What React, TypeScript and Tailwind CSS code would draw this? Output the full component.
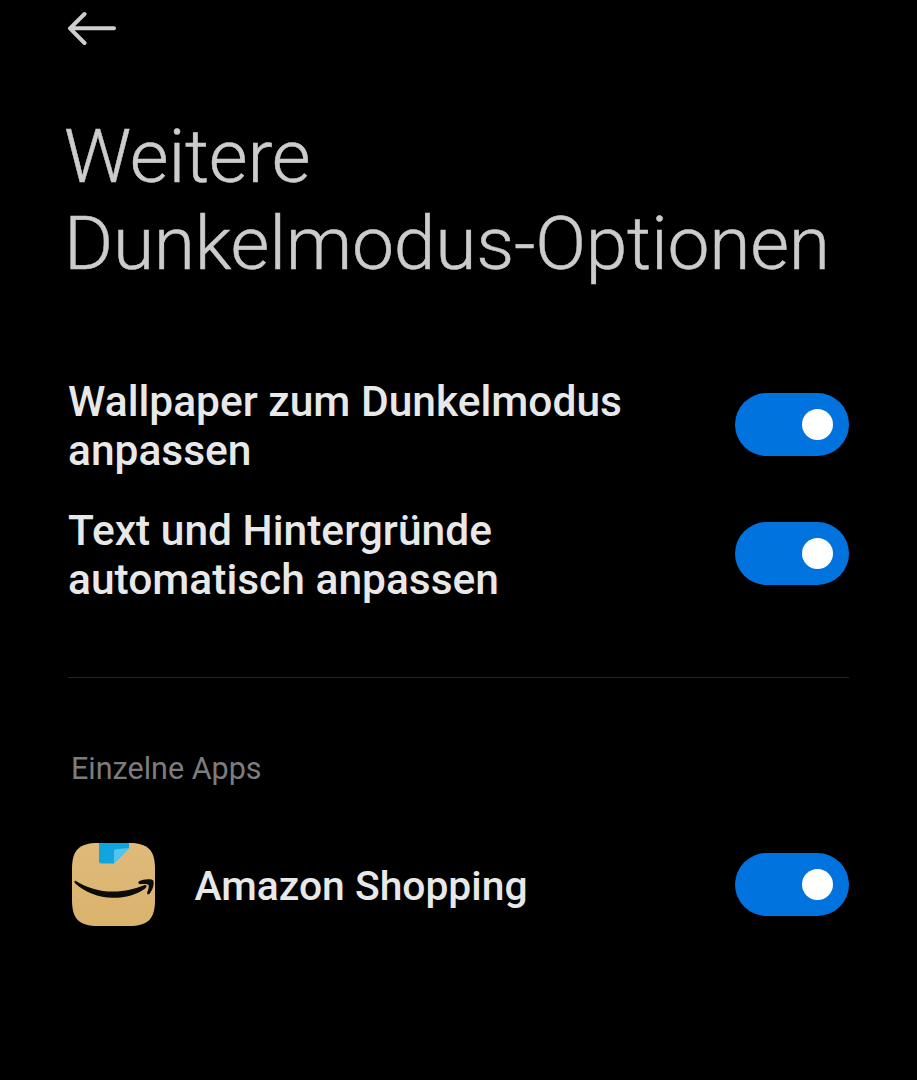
import { useState } from 'react';

function Toggle({ label }: { label: string }) {
    const [on, setOn] = useState(true);

    return (
        <button
            role="switch"
            aria-checked={on}
            aria-label={label}
            onClick={() => setOn(!on)}
            className={`flex h-[63px] w-[114px] shrink-0 items-center rounded-full px-4 ${on ? 'justify-end bg-[#0073de]' : 'justify-start bg-[#333333]'}`}
        >
            <span className="h-[31px] w-[31px] rounded-full bg-white"></span>
        </button>
    );
}

function AmazonIcon() {
    return (
        <svg viewBox="0 0 83 83" className="h-[83px] w-[83px] shrink-0">
            <defs>
                <clipPath id="tile">
                    <path d="M26 0H57C76 0 83 7 83 26V57C83 76 76 83 57 83H26C7 83 0 76 0 57V26C0 7 7 0 26 0Z" />
                </clipPath>
                <linearGradient id="paper" x1="0" y1="0" x2="0" y2="1">
                    <stop offset="0" stopColor="#dfba79" />
                    <stop offset="1" stopColor="#dab36d" />
                </linearGradient>
            </defs>
            <g clipPath="url(#tile)">
                <rect width="83" height="83" fill="url(#paper)" />
                {/* Tape with the folded corner */}
                <path d="M27 0H57V5L42 20.500H29Q27 20.500 27 18.500Z" fill="#10a5dc" />
                <path d="M57 5L42 20.500V9Q42 6 45 6Z" fill="#52c4ee" />
            </g>
            {/* Smile */}
            <path
                d="M3.500 37.800C15 45 27 48.600 41 48.600C53 48.600 63 46 72 42.300C74.500 41.500 75.500 43.500 73.500 45.200C65 51.500 54 54.800 41 54.800C26 54.800 13 49 3 40.200C2 39 2.500 37.300 3.500 37.800Z"
                fill="#0d0b08"
            />
            <path
                d="M67 38.300C71 35.800 80 35.500 81.200 37.600C82.600 40 81 47 77.600 50.700C76.400 51.800 74.600 51.300 75.200 49.700C76.200 47 77.300 43 76.400 41.800C75.200 40.600 71 40.900 68 41.200C66.300 41.200 65.900 39.200 67 38.300Z"
                fill="#0d0b08"
            />
        </svg>
    );
}

export default function App() {
    return (
        <main className="flex h-[1080px] w-[917px] flex-col overflow-hidden bg-black px-[68px] font-['Roboto','Noto_Sans',sans-serif] text-[#e8e8e8]">
            <button aria-label="Zurück" className="mt-[11px] h-[35px] w-[49px]">
                <svg
                    viewBox="0 0 49 35"
                    className="h-full w-full"
                    fill="none"
                    stroke="#cecece"
                    strokeWidth="4"
                    strokeLinecap="round"
                    strokeLinejoin="round"
                >
                    <path d="M16.500 3L2 17.300L16.500 32M2 17.300H46" />
                </svg>
            </button>

            <h1 className="mt-[67px] -ml-[4px] text-[75px] leading-[87px] font-light tracking-[-0.25px] whitespace-nowrap text-[#cccccc] [-webkit-text-stroke:0.5px_#cccccc]">
                Weitere
                <br />
                Dunkelmodus-Optionen
            </h1>

            <section className="mt-[89px] flex flex-col gap-[31px] text-[42.500px] leading-[49px] font-medium">
                <div className="flex items-start justify-between pt-px">
                    <p className="whitespace-nowrap">
                        Wallpaper zum Dunkelmodus
                        <br />
                        anpassen
                    </p>
                    <div className="pt-4">
                        <Toggle label="Wallpaper zum Dunkelmodus anpassen" />
                    </div>
                </div>
                <div className="flex items-start justify-between">
                    <p className="whitespace-nowrap">
                        Text und Hintergründe
                        <br />
                        automatisch anpassen
                    </p>
                    <div className="pt-4">
                        <Toggle label="Text und Hintergründe automatisch anpassen" />
                    </div>
                </div>
            </section>

            <hr className="mt-[73px] border-[#222222]" />

            <h2 className="mt-[72px] pl-[3px] text-[30.500px] leading-[38px] text-[#7c7c7c]">Einzelne Apps</h2>

            <div className="mt-[55px] flex items-center pl-1">
                <AmazonIcon />
                <span className="mr-auto ml-[39.500px] pt-0.5 text-[40.800px] leading-[48px] font-medium">Amazon Shopping</span>
                <Toggle label="Amazon Shopping" />
            </div>
        </main>
    );
}
